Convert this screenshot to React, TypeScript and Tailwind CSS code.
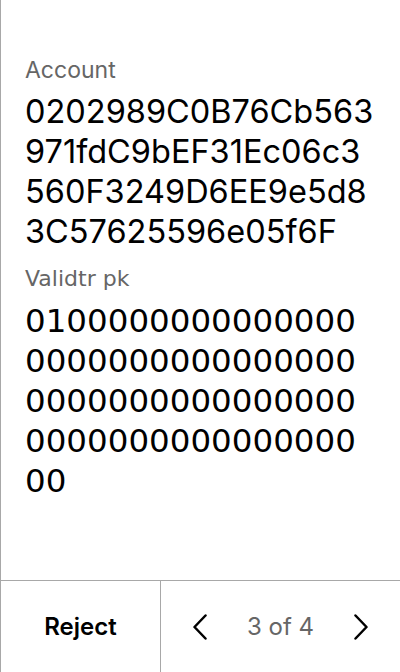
import React from "react";

export default function App() {
  return (
    <div className="w-[400px] h-[672px] bg-white flex flex-col border-l border-[#a8a8a8]" style={{ fontFamily: "Inter, 'Noto Sans', sans-serif" }}>
      <div className="flex-1 pl-6 pr-5 pt-[56px]">
        <div className="text-[23px] leading-[28px] text-[#666666]">Account</div>
        <div className="mt-2 text-[32.5px] leading-[40px] text-black break-all">
          0202989C0B76Cb563971fdC9bEF31Ec06c3560F3249D6EE9e5d83C57625596e05f6F
        </div>
        <div className="mt-[13px] text-[22px] leading-[28px] text-[#666666] font-['DejaVu_Sans',sans-serif]">Validtr pk</div>
        <div className="mt-2 w-[345px] text-[32.5px] leading-[40px] text-black break-all font-['DejaVu_Sans',sans-serif]">
          010000000000000000000000000000000000000000000000000000000000000000
        </div>
      </div>
      <div className="h-[92px] border-t border-[#a8a8a8] flex">
        <div className="w-[160px] border-r border-[#a8a8a8] flex items-center justify-center text-[24px] font-semibold text-black">
          Reject
        </div>
        <div className="flex-1 flex items-center justify-between px-8">
          <svg width="14" height="26" viewBox="0 0 14 26" fill="none" stroke="black" strokeWidth="2.5" strokeLinecap="round" strokeLinejoin="round">
            <path d="M12.5 1.5 L1.5 13 L12.5 24.5" />
          </svg>
          <span className="text-[24px] text-[#666666]">3 of 4</span>
          <svg width="14" height="26" viewBox="0 0 14 26" fill="none" stroke="black" strokeWidth="2.5" strokeLinecap="round" strokeLinejoin="round">
            <path d="M1.5 1.5 L12.5 13 L1.5 24.5" />
          </svg>
        </div>
      </div>
    </div>
  );
}
